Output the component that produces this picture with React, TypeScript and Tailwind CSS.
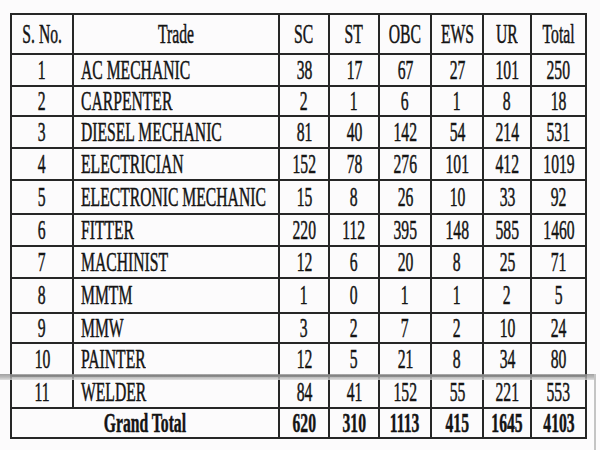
import React from "react";

type Row = { no: string; trade: string; v: number[]; h: number };

const rows: Row[] = [
    { no: "1", trade: "AC MECHANIC", v: [38, 17, 67, 27, 101, 250], h: 32 },
    { no: "2", trade: "CARPENTER", v: [2, 1, 6, 1, 8, 18], h: 30 },
    { no: "3", trade: "DIESEL MECHANIC", v: [81, 40, 142, 54, 214, 531], h: 32 },
    { no: "4", trade: "ELECTRICIAN", v: [152, 78, 276, 101, 412, 1019], h: 32 },
    { no: "5", trade: "ELECTRONIC MECHANIC", v: [15, 8, 26, 10, 33, 92], h: 34 },
    { no: "6", trade: "FITTER", v: [220, 112, 395, 148, 585, 1460], h: 32 },
    { no: "7", trade: "MACHINIST", v: [12, 6, 20, 8, 25, 71], h: 32 },
    { no: "8", trade: "MMTM", v: [1, 0, 1, 1, 2, 5], h: 35 },
    { no: "9", trade: "MMW", v: [3, 2, 7, 2, 10, 24], h: 30 },
    { no: "10", trade: "PAINTER", v: [12, 5, 21, 8, 34, 80], h: 33 },
    { no: "11", trade: "WELDER", v: [84, 41, 152, 55, 221, 553], h: 32 },
];

const totals = [620, 310, 1113, 415, 1645, 4103];
const heads = ["SC", "ST", "OBC", "EWS", "UR", "Total"];

// scanned print is a very narrow Times, so squeeze the serif horizontally
const Txt = ({ children, left }: { children: React.ReactNode; left?: boolean }) => (
    <div className={`flex ${left ? "justify-start pl-[7px]" : "justify-center"}`}>
        <span className={`shrink-0 inline-block whitespace-nowrap scale-x-[0.58] ${left ? "origin-left" : "origin-center"}`}>
            {children}
        </span>
    </div>
);

const cell = "border-2 border-[#262626] p-0 align-middle overflow-visible";

export default function App() {
    return (
        <div className="relative w-[600px] h-[450px] overflow-hidden bg-[#fcfbfc] text-[#141414] [-webkit-text-stroke:0.5px_#141414]"
             style={{ fontFamily: '"Liberation Serif", "Times New Roman", serif' }}>
            <div className="pl-[10px] pt-[13px]">
                <table className="w-[575px] border-collapse text-[27px] leading-none table-fixed border-2 border-[#262626]">
                    <colgroup>
                        <col className="w-[62px]" />
                        <col className="w-[206px]" />
                        <col className="w-[50px]" />
                        <col className="w-[50px]" />
                        <col className="w-[52px]" />
                        <col className="w-[52px]" />
                        <col className="w-[48px]" />
                        <col className="w-[55px]" />
                    </colgroup>
                    <thead>
                        <tr className="h-[40px]">
                            <th className={`${cell} font-normal`}><Txt>S. No.</Txt></th>
                            <th className={`${cell} font-normal`}><Txt>Trade</Txt></th>
                            {heads.map((h) => (
                                <th key={h} className={`${cell} font-normal`}><Txt>{h}</Txt></th>
                            ))}
                        </tr>
                    </thead>
                    <tbody>
                        {rows.map((r) => (
                            <tr key={r.no} style={{ height: r.h }}>
                                <td className={cell}><Txt>{r.no}</Txt></td>
                                <td className={cell}><Txt left>{r.trade}</Txt></td>
                                {r.v.map((n, i) => (
                                    <td key={i} className={cell}><Txt>{n}</Txt></td>
                                ))}
                            </tr>
                        ))}
                        <tr className="h-[30px] font-bold">
                            <td colSpan={2} className={cell}><Txt>Grand Total</Txt></td>
                            {totals.map((n, i) => (
                                <td key={i} className={cell}><Txt>{n}</Txt></td>
                            ))}
                        </tr>
                    </tbody>
                </table>
            </div>

            {/* scanner streak across the page */}
            <div className="absolute left-0 top-[374px] w-[596px] h-[6px] bg-gradient-to-b from-[#8c8c8c] via-[#a8a8a8] to-[#d8d8d8] opacity-80" />
            <div className="absolute left-[594px] top-[374px] w-[2px] h-[76px] bg-[#c4c4c4]" />
        </div>
    );
}
